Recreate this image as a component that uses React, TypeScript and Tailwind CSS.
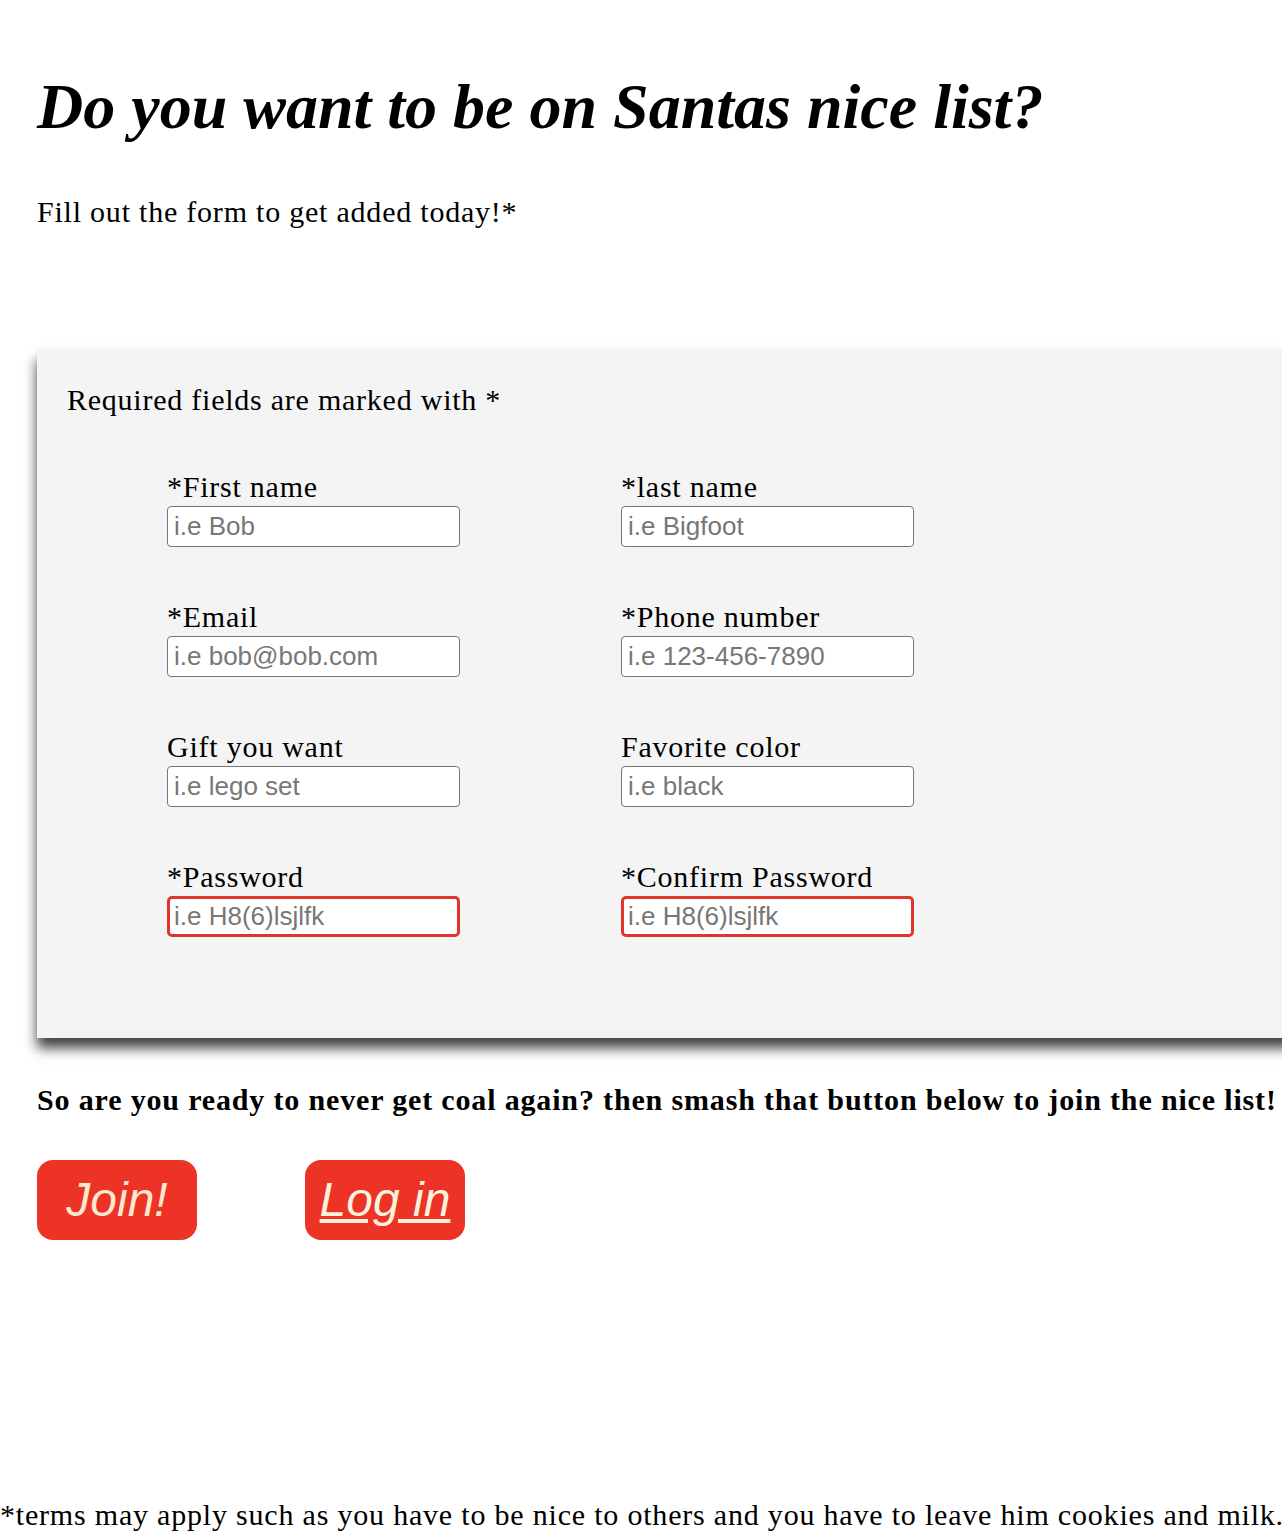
import React from "react";

const fields = [
  { label: "*First name", placeholder: "i.e Bob" },
  { label: "*last name", placeholder: "i.e Bigfoot" },
  { label: "*Email", placeholder: "i.e bob@bob.com" },
  { label: "*Phone number", placeholder: "i.e 123-456-7890" },
  { label: "Gift you want", placeholder: "i.e lego set" },
  { label: "Favorite color", placeholder: "i.e black" },
  { label: "*Password", placeholder: "i.e H8(6)lsjlfk", danger: true },
  { label: "*Confirm Password", placeholder: "i.e H8(6)lsjlfk", danger: true },
];

export default function App() {
  return (
    <div className="w-[1300px] min-h-[1534px] bg-white text-black font-['Liberation_Serif',serif] overflow-hidden">
      <div className="pl-[37px]">
        {/* Heading */}
        <h1 className="pt-[72px] text-[64px] leading-[70px] font-bold italic">
          Do you want to be on Santas nice list?
        </h1>
        <p className="mt-[53px] text-[30px] leading-[34px] tracking-[0.78px]">
          Fill out the form to get added today!*
        </p>

        {/* Form box */}
        <form className="mt-[121px] w-[1290px] bg-[#f4f4f4] pl-[30px] pt-[33px] pb-[101px] shadow-[0_10px_12px_rgba(0,0,0,0.75)]">
          <p className="text-[30px] leading-[34px] tracking-[0.76px]">Required fields are marked with *</p>
          <div className="mt-[55px] ml-[100px] grid grid-cols-[454px_454px] gap-y-[55px]">
            {fields.map((f) => (
              <label key={f.label} className="flex flex-col">
                <span className="text-[30px] leading-[30px] tracking-[0.76px]">{f.label}</span>
                <input
                  type="text"
                  placeholder={f.placeholder}
                  className={
                    f.danger
                      ? "mt-[4px] w-[293px] h-[41px] bg-white rounded-[5px] border-[3px] border-[#e0352b] px-[4px] text-[26px] font-['Liberation_Sans',sans-serif] placeholder:text-[#777]"
                      : "mt-[4px] w-[293px] h-[41px] bg-white rounded-[4px] border-[1.5px] border-[#767676] px-[6px] text-[26px] font-['Liberation_Sans',sans-serif] placeholder:text-[#777]"
                  }
                />
              </label>
            ))}
          </div>
        </form>

        <p className="mt-[45px] text-[30px] leading-[34px] tracking-[0.84px] font-bold whitespace-nowrap">
          So are you ready to never get coal again? then smash that button below to join the nice list!
        </p>

        {/* Buttons */}
        <div className="mt-[43px] flex gap-[108px]">
          <button className="w-[160px] h-[80px] rounded-[16px] bg-[#ec3326] text-[#fbe8cf] text-[48px] italic font-['Liberation_Sans',sans-serif]">
            Join!
          </button>
          <button className="w-[160px] h-[80px] rounded-[16px] bg-[#ec3326] text-[#f8f3dc] text-[48px] italic underline font-['Liberation_Sans',sans-serif]">
            Log in
          </button>
        </div>
      </div>

      <p className="mt-[258px] text-[30px] leading-[34px] tracking-[0.8px] whitespace-nowrap">
        *terms may apply such as you have to be nice to others and you have to leave him cookies and milk.
      </p>
    </div>
  );
}
